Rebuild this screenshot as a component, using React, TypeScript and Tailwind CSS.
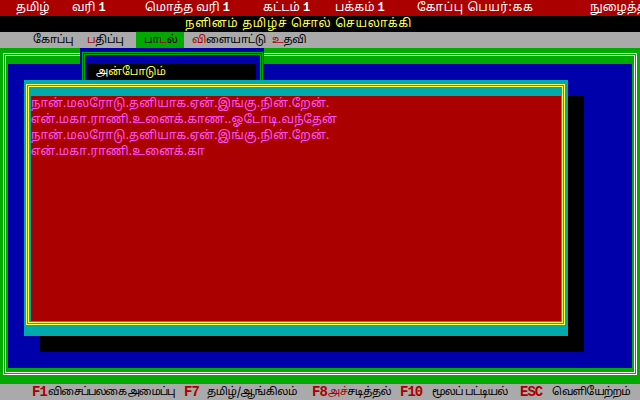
const tamil = "font-['Noto_Sans_Tamil','Lohit_Tamil','Noto_Sans',sans-serif]";
const mono = "font-['Liberation_Mono',monospace] font-bold";

const StatusBar = () => {
  return (
    <div className="flex h-4 items-center bg-[#aa0000] pl-[16px] text-[12px] leading-4 text-white whitespace-nowrap overflow-hidden">
      <span className="w-[56px] shrink-0">தமிழ்</span>
      <span className="w-[73px] shrink-0">
        வரி <span className={mono}>1</span>
      </span>
      <span className="w-[118px] shrink-0">
        மொத்த வரி <span className={mono}>1</span>
      </span>
      <span className="w-[72px] shrink-0">
        கட்டம் <span className={mono}>1</span>
      </span>
      <span className="w-[82px] shrink-0">
        பக்கம் <span className={mono}>1</span>
      </span>
      <span className="w-[173px] shrink-0 tracking-[0.6px]">கோப்பு பெயர்:கக</span>
      <span className="shrink-0">நுழைத்தல்</span>
    </div>
  );
};

const TitleBar = () => {
  return (
    <div className="flex h-4 items-center bg-black pl-[185px] text-[12px] leading-4 tracking-[0.7px] text-[#ffff55] whitespace-nowrap">
      நளினம் தமிழ்ச் சொல் செயலாக்கி
    </div>
  );
};

const MenuBar = () => {
  return (
    <div className="flex h-4 items-center bg-[#aaaaaa] pl-[24px] text-[11px] leading-4 tracking-[-0.3px] text-black whitespace-nowrap">
      <span className="w-[56px] shrink-0 pl-[9px]">கோப்பு</span>
      <span className="w-[56px] shrink-0 pl-[7px]">
        <span className="text-[#aa0000]">ப</span>திப்பு
      </span>
      <span className="h-4 w-[48px] shrink-0 bg-[#00aa00] pl-[8px]">
        பா<span className="text-[#aa0000]">ட</span>ல்
      </span>
      <span className="w-[80px] shrink-0 pl-[8px]">
        <span className="text-[#aa0000]">வி</span>ளையாட்டு
      </span>
      <span className="w-[48px] shrink-0 pl-[8px]">
        <span className="text-[#aa0000]">உ</span>தவி
      </span>
    </div>
  );
};

const SongWindow = () => {
  return (
    <div className="absolute left-[80px] top-0 h-[32px] w-[184px] bg-[#0000aa] pl-[2px] pr-[1px] pt-[4px]">
      <div className="h-full border-l border-r border-t border-[#00aa00] p-[1px] pb-0">
        <div className="h-full border-l border-r border-t border-[#00aa00] pl-[2px] pr-[4px] pt-[9px]">
          <div className="h-4 bg-black pl-[9px] text-[11px] leading-4 text-[#ffff55] whitespace-nowrap">
            <span className="text-white">அ</span>ன்போடும்
          </div>
        </div>
      </div>
    </div>
  );
};

const lines = [
  "நான்.மலரோடு.தனியாக.ஏன்.இங்கு.நின்.றேன்.",
  "என்.மகா.ராணி.உனைக்.காண..ஓடோடி.வந்தேன்",
  "நான்.மலரோடு.தனியாக.ஏன்.இங்கு.நின்.றேன்.",
  "என்.மகா.ராணி.உனைக்.கா",
];

const Editor = () => {
  return (
    <div className="h-[256px] w-[544px] bg-[#00aaaa] pb-[11px] pl-[2px] pr-[3px] pt-[4px] shadow-[16px_16px_0_0_#000]">
      <div className="h-full border border-[#ffff55] p-[1px]">
        <div className="flex h-full flex-col border border-[#ffff55] pb-[1px] pl-[2px] pr-[1px] pt-[9px]">
          <div className="flex-1 bg-[#aa0000] text-[12px] leading-4 tracking-[0.2px] text-[#ff55ff] whitespace-nowrap">
            {lines.map((l, i) => (
              <div key={i} className="h-4">
                {l}
              </div>
            ))}
          </div>
        </div>
      </div>
    </div>
  );
};

const Desktop = () => {
  return (
    <div className="relative h-[336px] bg-[#00aa00] pb-[9px] pl-[3px] pr-[3px] pt-[5px]">
      <div className="h-full border border-white p-[1px]">
        <div className="h-full border border-white pb-[4px] pl-[2px] pr-[2px] pt-[8px]">
          <div className="h-full bg-[#0000aa] pl-[16px] pt-[16px]">
            <Editor />
          </div>
        </div>
      </div>
      <SongWindow />
    </div>
  );
};

const KeyBar = () => {
  return (
    <div className="flex h-4 items-center bg-[#aaaaaa] pl-[32px] text-[11px] leading-4 tracking-[-0.4px] text-black whitespace-nowrap overflow-hidden">
      <span className="flex w-[152px] shrink-0">
        <span className={`${mono} w-[16px] tracking-[-1px] text-[14px] text-[#aa0000]`}>F1</span>
        <span className="tracking-[-1.2px]">விசைப்பலகை அமைப்பு</span>
      </span>
      <span className="flex w-[128px] shrink-0">
        <span className={`${mono} w-[23px] tracking-[-1px] text-[14px] text-[#aa0000]`}>F7</span>
        <span>தமிழ்/ஆங்கிலம்</span>
      </span>
      <span className="flex w-[88px] shrink-0">
        <span className={`${mono} w-[16px] tracking-[-1px] text-[14px] text-[#aa0000]`}>F8</span>
        <span>
          <span className="text-[#aa0000]">அச்</span>சடித்தல்
        </span>
      </span>
      <span className="flex w-[120px] shrink-0">
        <span className={`${mono} w-[32px] tracking-[-1px] text-[14px] text-[#aa0000]`}>F10</span>
        <span className="tracking-[-0.8px]">மூலப் பட்டியல்</span>
      </span>
      <span className="flex shrink-0">
        <span className={`${mono} w-[32px] tracking-[-1px] text-[14px] text-[#aa0000]`}>ESC</span>
        <span className="tracking-[-0.9px]">வெளியேற்றம்</span>
      </span>
    </div>
  );
};

export default function App() {
  return (
    <div className={`flex h-[400px] w-[640px] flex-col overflow-hidden bg-black ${tamil}`}>
      <StatusBar />
      <TitleBar />
      <MenuBar />
      <Desktop />
      <KeyBar />
    </div>
  );
}
